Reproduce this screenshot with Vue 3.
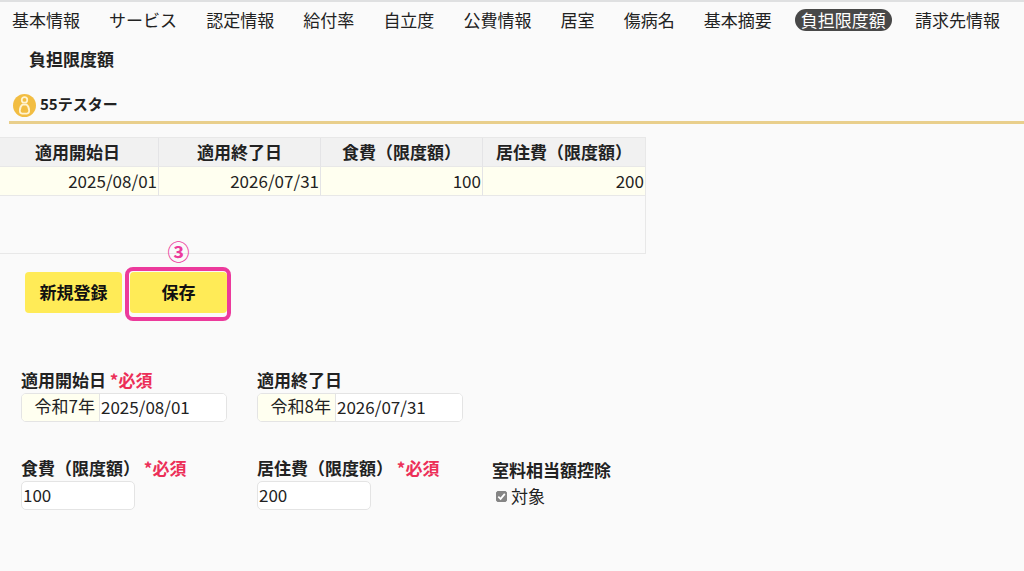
<template>
  <div class="page">
    <nav class="tabs">
      <a
        v-for="tab in tabs"
        :key="tab"
        href="#"
        class="tab"
        :class="{ active: tab === currentTab }"
        @click.prevent="currentTab = tab"
      >{{ tab }}</a>
    </nav>

    <h1 class="title">負担限度額</h1>

    <div class="user">
      <svg class="user-icon" viewBox="0 0 24 24" aria-hidden="true">
        <circle cx="12" cy="12" r="12" fill="#f2bd42" />
        <g fill="none" stroke="#fff3d0" stroke-width="1.8" stroke-linejoin="round">
          <circle cx="12" cy="6.2" r="2.9" />
          <path d="M10 11h4c1.800 1.200 2.900 3.600 2.900 6.600 0 1.900-.8 2.800-2.300 2.800H9.400c-1.500 0-2.300-.9-2.300-2.800 0-3 1.100-5.400 2.900-6.600z" />
        </g>
      </svg>
      <span>55テスター</span>
    </div>

    <div class="list">
      <table>
        <thead>
          <tr>
            <th v-for="col in columns" :key="col">{{ col }}</th>
          </tr>
        </thead>
        <tbody>
          <tr v-for="row in rows" :key="row.start">
            <td>{{ row.start }}</td>
            <td>{{ row.end }}</td>
            <td>{{ row.food }}</td>
            <td>{{ row.room }}</td>
          </tr>
        </tbody>
      </table>
    </div>

    <div class="actions">
      <button type="button" class="btn">新規登録</button>
      <div class="step">
        <span class="step-no">③</span>
        <button type="button" class="btn">保存</button>
      </div>
    </div>

    <form class="form" @submit.prevent>
      <div class="field">
        <label for="start">適用開始日 <span class="required">*必須</span></label>
        <div class="date">
          <span class="era">令和7年</span>
          <input id="start" v-model="form.start" type="text" />
        </div>
      </div>
      <div class="field">
        <label for="end">適用終了日</label>
        <div class="date">
          <span class="era">令和8年</span>
          <input id="end" v-model="form.end" type="text" />
        </div>
      </div>
      <div class="field first">
        <label for="food">食費（限度額） <span class="required">*必須</span></label>
        <input id="food" v-model="form.food" class="amount" type="text" />
      </div>
      <div class="field">
        <label for="room">居住費（限度額） <span class="required">*必須</span></label>
        <input id="room" v-model="form.room" class="amount" type="text" />
      </div>
      <fieldset class="field deduction">
        <legend>室料相当額控除</legend>
        <label class="check">
          <input v-model="form.deduct" type="checkbox" />
          <svg class="tick" viewBox="0 0 11 11" aria-hidden="true">
            <path d="M2.300 5.600l2.300 2.300 4.200-5" fill="none" stroke="#fff" stroke-width="1.700" />
          </svg>
          対象
        </label>
      </fieldset>
    </form>
  </div>
</template>

<script setup>
import { reactive, ref } from "vue";

const tabs = [
  "基本情報",
  "サービス",
  "認定情報",
  "給付率",
  "自立度",
  "公費情報",
  "居室",
  "傷病名",
  "基本摘要",
  "負担限度額",
  "請求先情報",
];
const currentTab = ref("負担限度額");

const columns = ["適用開始日", "適用終了日", "食費（限度額）", "居住費（限度額）"];
const rows = [{ start: "2025/08/01", end: "2026/07/31", food: 100, room: 200 }];

const form = reactive({
  start: "2025/08/01",
  end: "2026/07/31",
  food: "100",
  room: "200",
  deduct: true,
});
</script>

<style>
body {
  background: #fafafa;
}
</style>

<style scoped>
.page {
  min-height: 100vh;
  box-sizing: border-box;
  border-top: 2px solid #dfe0e1;
  background: #fafafa;
  color: #222;
  font-family: "Noto Sans CJK JP", "Noto Sans", sans-serif;
  font-size: 17px;
  line-height: 24px;
  overflow-x: hidden;
}

.tabs {
  display: flex;
  justify-content: space-between;
  padding: 7px 18px 0 6px;
  white-space: nowrap;
}

.tab {
  padding: 0 6px;
  border-radius: 11px;
  line-height: 22px;
  color: #222;
  text-decoration: none;
}

.tab.active {
  background: #484848;
  color: #fff;
}

.title {
  margin: 16px 0 0 29px;
  font-size: 17px;
  line-height: 24px;
  font-weight: bold;
}

.user {
  display: flex;
  align-items: center;
  gap: 4px;
  margin: 21px 0 0 9px;
  padding: 0 0 3px 4px;
  border-bottom: 3px solid #e9cf8c;
  font-size: 15px;
  font-weight: bold;
}

.user-icon {
  width: 23px;
  height: 23px;
}

.user span {
  margin-bottom: 2px;
}

/* 一覧の左端は画面外に少しはみ出す */
.list {
  width: 648px;
  min-height: 115px;
  margin: 13px 0 0 -3px;
  border: 1px solid #e8e8e8;
  border-left: none;
}

table {
  width: 100%;
  table-layout: fixed;
  border-collapse: separate;
  border-spacing: 0;
}

th,
td {
  height: 28px;
  padding: 0 1px;
  border-right: 1px solid #e4e4e6;
  border-bottom: 1px solid #e8e8e8;
}

th:last-child,
td:last-child {
  border-right: none;
}

th {
  background: #f1f1f1;
}

td {
  background: #fffff0;
  text-align: right;
}

.actions {
  display: flex;
  gap: 8px;
  margin: 18px 0 0 25px;
}

.btn {
  width: 97px;
  height: 41px;
  padding: 0 0 2px;
  border: none;
  border-radius: 4px;
  background: #ffeb57;
  color: #111;
  font-family: inherit;
  font-size: 17px;
  font-weight: bold;
  cursor: pointer;
}

.step {
  position: relative;
}

.step::after {
  content: "";
  position: absolute;
  inset: -5px -4px -8px -5px;
  border: 4px solid #ec3a9c;
  border-radius: 8px;
  pointer-events: none;
}

.step-no {
  position: absolute;
  top: -34px;
  left: 0;
  right: 0;
  color: #ec3a9c;
  font-size: 22px;
  font-weight: bold;
  text-align: center;
}

.form {
  display: grid;
  grid-template-columns: 236px 235px auto;
  row-gap: 34px;
  margin: 55px 0 0 21px;
}

.field {
  display: flex;
  flex-direction: column;
  align-items: flex-start;
  gap: 1px;
  font-weight: bold;
}

.field.first {
  grid-column: 1;
}

.required {
  color: #ec2f58;
}

.date {
  display: flex;
  width: 204px;
  height: 27px;
  border: 1px solid #e4e4e4;
  border-radius: 5px;
  background: #fff;
  overflow: hidden;
}

.era {
  width: 73px;
  padding-right: 4px;
  border-right: 1px solid #e4e4e4;
  background: #fffff0;
  font-weight: normal;
  text-align: right;
}

input[type="text"] {
  box-sizing: border-box;
  padding: 0 1px 2px;
  border: none;
  background: #fff;
  color: #222;
  font-family: inherit;
  font-size: 17px;
}

.date input {
  flex: 1;
  min-width: 0;
}

input.amount {
  width: 114px;
  height: 29px;
  border: 1px solid #e4e4e4;
  border-radius: 5px;
}

.deduction {
  min-width: 0;
  margin: 0;
  padding: 2px 0 0;
  border: none;
}

.deduction legend {
  float: left;
  padding: 0;
}

.check {
  display: grid;
  grid-template-columns: 11px auto;
  align-items: center;
  gap: 4px;
  margin: 1px 0 0 4px;
  font-weight: normal;
}

.check input {
  grid-area: 1 / 1;
  appearance: none;
  width: 11px;
  height: 11px;
  margin: 0;
  border: 1px solid #767676;
  border-radius: 2px;
  background: #fff;
}

.check input:checked {
  border-color: #858585;
  background: #858585;
}

.tick {
  grid-area: 1 / 1;
  width: 11px;
  height: 11px;
  pointer-events: none;
}
</style>
